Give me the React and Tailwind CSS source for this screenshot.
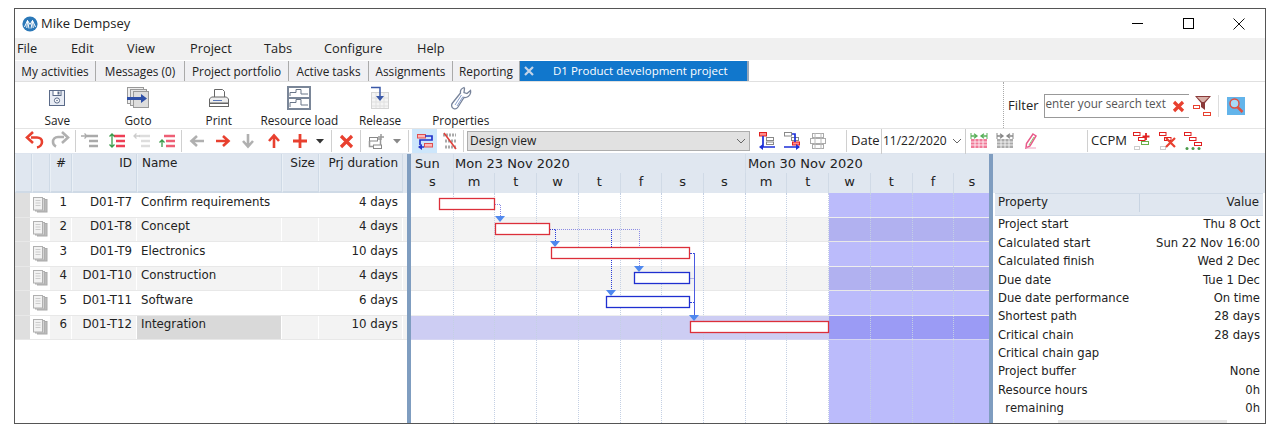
const R = '#e8402f';
const G = '#b0b0b0';

function Svg({ w = 20, h = 20, children }) {
  return <svg width={w} height={h} viewBox={`0 0 ${w} ${h}`} fill="none" className="block shrink-0">{children}</svg>;
}
const Logo = () => (
  <Svg w={16} h={16}>
    <circle cx="8" cy="8" r="7.6" fill="#2b78b8" />
    <path d="M2.5 11 L5.5 4.5 L8 8.5 L10.5 4.5 L13.5 11 M5.5 4.5 L4.8 12 M5.5 4.5 L7 12.5 M10.5 4.5 L9 12.5 M10.5 4.5 L11.2 12" stroke="#fff" strokeWidth="1" />
  </Svg>
);
const SaveIcon = () => (
  <Svg w={18} h={18}>
    <rect x="1.5" y="1.5" width="15" height="15" fill="#e8ecf4" stroke="#5a6a88" />
    <rect x="5" y="1.5" width="8" height="5" fill="#fff" stroke="#5a6a88" />
    <rect x="9.5" y="2.5" width="2" height="3" fill="#5a6a88" />
    <circle cx="9" cy="11.5" r="2.6" fill="#fff" stroke="#5a6a88" />
    <circle cx="9" cy="11.5" r=".8" fill="#5a6a88" />
  </Svg>
);
const GotoIcon = () => (
  <Svg w={24} h={22}>
    <rect x="1.5" y=".5" width="16" height="16" fill="#eee" stroke="#999" />
    <rect x="4.5" y="2.5" width="16" height="16" fill="#e4e4e4" stroke="#999" />
    <rect x="7.5" y="4.5" width="15" height="16" fill="#ddd" stroke="#999" />
    <path d="M1 10h14V7l6 4.500-6 4.500v-3H1z" fill="#2f50a8" />
  </Svg>
);
const PrintIcon = () => (
  <Svg w={22} h={20}>
    <path d="M6.5 9V1.5h8l2 2V9" fill="#fff" stroke="#666" />
    <path d="M1.5 15v-4l2-2h15l2 2v4z" fill="#eee" stroke="#666" />
    <rect x="1.5" y="15.500" width="19" height="3" fill="#fff" stroke="#666" />
    <path d="M5 12.500h9" stroke="#5a78b8" />
  </Svg>
);
const LoadIcon = () => (
  <Svg w={24} h={24}>
    <rect x="1" y="1" width="22" height="22" fill="#fff" stroke="#7a8698" strokeWidth="2" />
    <path d="M1 12h22" stroke="#7a8698" strokeWidth="2" />
    <path d="M3 10V6.500h6V3.500h5V8h7M3 21v-4.500h6v-3h5V19h7" stroke="#6a7688" />
  </Svg>
);
const ReleaseIcon = () => (
  <Svg w={20} h={24}>
    <rect x="1.5" y="6.5" width="17" height="16" fill="#f4f4f4" stroke="#d4d4d4" />
    <path d="M2 12h16M2 16h16M2 20h16M6 7v15M10 7v15M14 7v15" stroke="#e0e0e0" />
    <path d="M1 1.5h9V11" stroke="#3a58a8" strokeWidth="1.5" />
    <path d="M6 10h8l-4 5z" fill="#3a58a8" />
  </Svg>
);
const WrenchIcon = () => (
  <Svg w={22} h={24}>
    <path d="M14 1.5c-2.5 1-4 3-3.5 5.5L2.5 17c-1.500 2-1 4.500 1 5.500s3.500 0 4.500-1.500l6-9.500c3 .5 6-1.500 6.500-4.500.2-1 .2-1.500 0-2.500l-3.500 3-3-1 .5-4z" fill="#fff" stroke="#77839a" strokeWidth="1.300" />
    <path d="M5 19l6.500-10M7 20l6-9.500" stroke="#8aa0cc" />
  </Svg>
);
const BigX = ({ s = 14, c = R, sw = 3.2 }) => (
  <Svg w={s} h={s}><path d={`M2 2L${s - 2} ${s - 2}M${s - 2} 2L2 ${s - 2}`} stroke={c} strokeWidth={sw} /></Svg>
);
const Funnel = () => (
  <Svg w={20} h={22}>
    <path d="M3 1h16l-6 7v7l-4-3V8z" fill="#8a3a3a" />
    <path d="M5 2h12l-5 5H10z" fill="#d8b0a8" />
    <rect x="1.500" y="10.500" width="6" height="3" fill="#fff" stroke={R} />
    <rect x="11.500" y="17.500" width="7" height="3" fill="#fff" stroke={R} />
  </Svg>
);
const SearchIcon = () => (
  <Svg w={18} h={18}>
    <rect width="18" height="18" fill="#63b4ea" />
    <circle cx="7.500" cy="6.500" r="4.500" fill="#a8daf6" stroke="#e0503f" strokeWidth="1.500" />
    <path d="M10.500 10l5 5" stroke="#e0503f" strokeWidth="2.500" />
  </Svg>
);
const Undo = ({ c = R }) => (
  <Svg w={20} h={20}>
    <path d="M6 6.500h6c3 0 5 2 5 4.500s-2 5-5 5.500" stroke={c} strokeWidth="2.600" />
    <path d="M8 1L2 6.500 8 12" stroke={c} strokeWidth="2.600" />
  </Svg>
);
const Redo = () => (
  <Svg w={20} h={20}>
    <g transform="matrix(-1 0 0 1 20 0)">
      <path d="M6 6h6c3 0 5 2 5 5s-2 4-3 4.500" stroke={G} strokeWidth="2.600" />
      <path d="M8 1L2 6.500 8 12" stroke={G} strokeWidth="2.600" />
    </g>
  </Svg>
);
const Indent = ({ lines, arrow, mode }) => (
  <Svg w={18} h={16}>
    <path d="M6 3h11M8 8h9M8 13h9" stroke={lines} strokeWidth="2.400" />
    {mode === 'both' ? (
      <path d="M4 1v13M1.500 3.500L4 1l2.500 2.500M1.500 11.500L4 14l2.500-2.500" stroke={arrow} strokeWidth="1.300" />
    ) : mode === 'up' ? (
      <path d="M4 14V7M1.500 9.500L4 7l2.500 2.500" stroke={arrow} strokeWidth="1.300" />
    ) : (
      <path d="M0 3h6M3.500 .5L6 3 3.500 5.500" stroke={arrow} strokeWidth="1.300" transform={mode === 'left' ? 'matrix(-1 0 0 1 7 0)' : undefined} />
    )}
  </Svg>
);
const Arrow = ({ dir, c }) => {
  const rot = { left: 180, right: 0, down: 90, up: -90 }[dir];
  return (
    <Svg w={16} h={16}>
      <g transform={`rotate(${rot} 8 8)`}>
        <path d="M1 8h12M8 3l5.500 5L8 13" stroke={c} strokeWidth="2.600" />
      </g>
    </Svg>
  );
};
const Plus = () => <Svg w={16} h={16}><path d="M8 1v14M1 8h14" stroke={R} strokeWidth="2.800" /></Svg>;
const Caret = ({ c = '#333' }) => <Svg w={8} h={5}><path d="M0 0h8L4 4.500z" fill={c} /></Svg>;
const Chev = () => <svg width="10" height="6" viewBox="0 0 10 6" fill="none" className="shrink-0"><path d="M1 1l4 4 4-4" stroke="#666" /></svg>;
const LinkGrey = () => (
  <Svg w={18} h={18}>
    <rect x="1.500" y="5.500" width="8" height="3.500" stroke="#888" fill="#fff" />
    <rect x="5.500" y="13" width="8" height="3.500" stroke="#888" fill="#fff" />
    <path d="M9.500 7h3v6M1.500 9v5.500h4M13 2v6M10 5h6" stroke="#999" strokeWidth="1.500" />
  </Svg>
);
const GanttLink = () => (
  <Svg w={18} h={18}>
    <rect x="1.500" y="2.500" width="8" height="3.500" fill="#ffb8b8" stroke="#e05050" />
    <rect x="8.500" y="11.500" width="8" height="3.500" fill="#ffb8b8" stroke="#e05050" />
    <path d="M9 4h7v4H4v5M8 15H3" stroke="#2233cc" strokeWidth="1.700" />
    <path d="M6 12l-4 3 4 3z" fill="#2233cc" />
  </Svg>
);
const DesignOff = () => (
  <Svg w={18} h={18}>
    <path d="M2 3h13M4 9h11M4 15h11" stroke="#aaa" strokeWidth="3" strokeDasharray="2 1" />
    <path d="M3 1l12 16" stroke="#e0403a" strokeWidth="1.500" />
  </Svg>
);
const MoveIcon = ({ v }) => {
  if (v === 'grey') return (
    <Svg w={18} h={18}>
      <rect x="3.500" y="1.500" width="11" height="4" fill="#fff" stroke="#aaa" />
      <rect x="1.500" y="6.500" width="15" height="5" fill="#fff" stroke="#aaa" />
      <rect x="3.500" y="12.500" width="11" height="4" fill="#fff" stroke="#aaa" />
      <path d="M6 1v16M12 1v16" stroke="#bbb" />
    </Svg>
  );
  return (
    <Svg w={18} h={18}>
      {v === 'a' ? <rect x="1.500" y=".5" width="7" height="3.500" fill="#ff8c8c" stroke="#e02020" /> : <rect x="1.500" y=".5" width="7" height="3.500" fill="#fff" stroke="#888" />}
      <rect x="8.500" y={5.500} width="7" height="3" fill="#fff" stroke="#888" />
      {v === 'a' ? <rect x="8.500" y="10" width="7" height="2.500" fill="#fff" stroke="#888" /> : <rect x="9.500" y="10" width="7" height="3" fill="#ff8c8c" stroke="#e02020" />}
      <path d={v === 'a' ? 'M5 4v11M17 15H3' : 'M9 2h3v8M1 15h15'} stroke="#1c2fd8" strokeWidth="1.700" />
      <path d={v === 'a' ? 'M5 12l-4 3 4 3z' : 'M13 12l4 3-4 3z'} fill="#1c2fd8" />
    </Svg>
  );
};
const CalIcon = ({ c, a }) => (
  <Svg w={18} h={16}>
    <rect x="1" y="6" width="16" height="9" fill={c} />
    <path d="M1 9h16M1 12h16M5 6v9M9 6v9M13 6v9" stroke="#fff" strokeWidth=".8" />
    <path d="M1 3h6M4 .8L7 3 4 5.200M17 3h-6M14 .8L11 3l3 2.200" stroke={a} strokeWidth="1.300" />
    <path d="M1 0v6M17 0v6" stroke={a} />
  </Svg>
);
const Pencil = () => (
  <Svg w={12} h={16}>
    <path d="M8 1l3 2-6 10-4 2 .5-4.500z" fill="#fff" stroke="#e85a8a" strokeWidth="1.500" />
    <path d="M4 12l5-8" stroke="#8ac070" />
    <path d="M1 15h10" stroke="#f0a0c0" />
  </Svg>
);
const Ccpm = ({ v }) => (
  <Svg w={18} h={18}>
    <rect x=".5" y=".5" width="6.500" height="3" fill="#fff" stroke="#e02020" />
    <rect x="5.500" y="5.500" width="6.500" height="3" fill="#fff" stroke="#e02020" />
    {v === 'add' && <rect x="8.500" y="9.500" width="7" height="3" fill="#fff" stroke="#6ab04a" />}
    {v !== 'dots' && <rect x="1.500" y="14.500" width="5" height="3" fill="#fff" stroke="#ccc" />}
    {v === 'add' && <path d="M13 1v7M9.500 4.500h7" stroke="#e02020" strokeWidth="1.800" />}
    {v === 'del' && <path d="M7 6l9 9M16 6l-9 9" stroke="#e8402f" strokeWidth="2.200" />}
    {v === 'dots' && (
      <g>
        <rect x="10.500" y="10.500" width="7" height="3" fill="#fff" stroke="#e02020" />
        <circle cx="3" cy="16.500" r="1.500" fill="#4a9a4a" />
        <circle cx="9" cy="16.500" r="1.500" fill="#4a9a4a" />
        <circle cx="15" cy="16.500" r="1.500" fill="#4a9a4a" />
      </g>
    )}
  </Svg>
);
const DocIcon = () => (
  <Svg w={15} h={16}>
    <rect x="4.500" y="2.500" width="9.500" height="12.500" fill="#bbb" stroke="#aaa" />
    <rect x="2.500" y="1.500" width="9" height="12.500" fill="#d4d4d4" stroke="#b0b0b0" />
    <rect x=".5" y=".5" width="9" height="12.500" fill="#f2f2f2" stroke="#b0b0b0" />
    <path d="M2.500 3.500h5M2.500 6h5M2.500 8.500h5" stroke="#ccc" />
  </Svg>
);

const Sep = () => <div className="h-[22px] w-px shrink-0 bg-[#d0d0d0]" />;
const Slot = ({ w, children }) => <div className="flex shrink-0 items-center justify-center" style={{ width: w }}>{children}</div>;

const tabs = [
  ['My activities', 81],
  ['Messages (0)', 89],
  ['Project portfolio', 104],
  ['Active tasks', 80],
  ['Assignments', 84],
  ['Reporting', 67],
];
const menu = [
  ['File', 54],
  ['Edit', 56],
  ['View', 63],
  ['Project', 74],
  ['Tabs', 60],
  ['Configure', 93],
  ['Help', 60],
];
const big = [
  ['Save', <SaveIcon />],
  ['Goto', <GotoIcon />],
  ['Print', <PrintIcon />],
  ['Resource load', <LoadIcon />],
  ['Release', <ReleaseIcon />],
  ['Properties', <WrenchIcon />],
];
const rows = [
  ['1', 'D01-T7', 'Confirm requirements', '4 days'],
  ['2', 'D01-T8', 'Concept', '4 days'],
  ['3', 'D01-T9', 'Electronics', '10 days'],
  ['4', 'D01-T10', 'Construction', '4 days'],
  ['5', 'D01-T11', 'Software', '6 days'],
  ['6', 'D01-T12', 'Integration', '10 days'],
];
const days = ['s', 'm', 't', 'w', 't', 'f', 's', 's', 'm', 't', 'w', 't', 'f', 's'];
const props = [
  ['Project start', 'Thu 8 Oct'],
  ['Calculated start', 'Sun 22 Nov 16:00'],
  ['Calculated finish', 'Wed 2 Dec'],
  ['Due date', 'Tue 1 Dec'],
  ['Due date performance', 'On time'],
  ['Shortest path', '28 days'],
  ['Critical chain', '28 days'],
  ['Critical chain gap', ''],
  ['Project buffer', 'None'],
  ['Resource hours', '0h'],
  ['\u00a0\u00a0remaining', '0h'],
];
const rowH = 'h-[24.500px]';
const DAY = 41.72;

function Tri({ x, y }) {
  return <path d={`M${x - 5} ${y} h10 l-5 6z`} fill="#4f88ee" />;
}
function GanttOverlay() {
  const bar = (x1, x2, y, c, k) => <rect key={k} x={x1 + 0.5} y={y + 0.5} width={x2 - x1 - 1} height="11" fill="#fff" stroke={c} strokeWidth="1.300" />;
  const red = '#dc2f3a';
  const blue = '#1f2fd0';
  return (
    <svg width="578" height="148" viewBox="411 193 578 148" className="absolute left-0 top-0 block" fill="none">
      <g stroke="#8a8ae4" strokeWidth="1" strokeDasharray="1 1">
        <path d="M495 204.500h5.500V216" />
        <path d="M555 229.500h84.500V267" />
      </g>
      <g stroke="#2b3fd8" strokeWidth="1" strokeDasharray="1 1">
        <path d="M550 229.500h5.500V241" />
        <path d="M611.500 230V291" />
      </g>
      <g stroke="#2b3fd8" strokeWidth="1">
        <path d="M690 253.500h4.500" strokeDasharray="2 1" />
        <path d="M694.500 253V316" stroke="#4a5ae0" />
        <path d="M690 302.500h4" strokeDasharray="2 1" />
      </g>
      <path d="M690 278.500h4" stroke="#b8b8e0" />
      {bar(439, 495, 198, red, 'a')}
      {bar(495, 550, 223, red, 'b')}
      {bar(551, 690, 247, red, 'c')}
      {bar(634, 690, 272, blue, 'd')}
      {bar(606, 690, 296, blue, 'e')}
      {bar(690, 829, 321, red, 'f')}
      <Tri x={500} y={216} />
      <Tri x={555} y={241} />
      <Tri x={639} y={266} />
      <Tri x={611} y={290} />
      <Tri x={694} y={315} />
    </svg>
  );
}

export default function App() {
  return (
    <div className="h-[434px] w-[1278px] overflow-hidden bg-white pl-[14px] pt-2 font-['Open_Sans','Noto_Sans',sans-serif] text-[12px] text-[#222]">
      <div className="flex h-[416px] w-[1252px] flex-col overflow-hidden border border-[#555]">
        {/* Title bar */}
        <div className="flex h-[29px] shrink-0 items-center bg-white pl-[7px]">
          <Logo />
          <span className="ml-[3px] text-[13px] text-[#222]">Mike Dempsey</span>
          <div className="ml-auto flex items-center pr-[2px]">
            <Slot w={48}><div className="h-px w-[11px] bg-black" /></Slot>
            <Slot w={54}><div className="h-[11px] w-[11px] border border-black" /></Slot>
            <Slot w={48}>
              <svg width="12" height="12" viewBox="0 0 12 12" fill="none"><path d="M.5.5l11 11M11.500.5l-11 11" stroke="#111" /></svg>
            </Slot>
          </div>
        </div>
        {/* Menu */}
        <div className="flex h-[22px] shrink-0 items-center bg-[#f0f0f0] pl-[2px] text-[12.800px]">
          {menu.map(([m, w]) => <div key={m} className="shrink-0" style={{ width: w }}>{m}</div>)}
        </div>
        {/* Tabs */}
        <div className="flex h-[22px] shrink-0 border-b border-[#e0e0e0] bg-white pt-px text-[11.800px]">
          {tabs.map(([t, w]) => (
            <div key={t} className="flex shrink-0 items-center justify-center border-r border-[#aaa] bg-[#f0f0f3] pt-[2px]" style={{ width: w }}>{t}</div>
          ))}
          <div className="flex w-[229px] shrink-0 items-center whitespace-nowrap border-r-2 border-[#9aa8b8] bg-[#1177cc] pl-[3px] text-[11.500px] text-white">
            <BigX s={12} c="#c4d4e8" sw={2.200} />
            <span className="mb-px ml-[18px]">D1 Product development project</span>
          </div>
        </div>
        {/* Big toolbar */}
        <div className="flex h-[47px] shrink-0 items-stretch border-b border-[#e4e4e4] pl-[2px]">
          {big.map(([t, ic]) => (
            <div key={t} className="flex w-[80.700px] shrink-0 flex-col items-center justify-end">
              <div className="flex h-[26px] items-center justify-center">{ic}</div>
              <div className="mt-[1px] whitespace-nowrap text-[11.800px] leading-[16px]">{t}</div>
            </div>
          ))}
          <div className="ml-auto flex w-[262px] items-center border-l border-dotted border-[#aaa] pl-[4px] pt-[2px]">
            <span className="text-[13px]">Filter</span>
            <div className="ml-[5px] flex h-[24px] w-[145px] items-center border border-r-0 border-[#999] pl-px text-[#555]">
              <span className="mb-[4px] text-[11.700px]">enter your search text</span>
            </div>
            <div className="-ml-[17px]"><BigX s={13} /></div>
            <div className="ml-[7px]"><Funnel /></div>
            <div className="ml-[6px] h-[22px] w-px bg-[#ddd]" />
            <div className="ml-[8px]"><SearchIcon /></div>
          </div>
        </div>
        {/* Second toolbar */}
        <div className="flex h-[25px] shrink-0 items-center border-b border-[#dde4ee] pl-[7px]">
          <Slot w={26}><Undo /></Slot>
          <Slot w={24}><Redo /></Slot>
          <Slot w={3} />
          <Sep />
          <Slot w={28}><Indent lines="#aaa" arrow="#aaa" mode="right" /></Slot>
          <Slot w={25}><Indent lines="#ee3f55" arrow="#3a9a4a" mode="both" /></Slot>
          <Slot w={25}><Indent lines="#ddd" arrow="#ccc" mode="left" /></Slot>
          <Slot w={25}><Indent lines="#ee5f75" arrow="#3a9a4a" mode="up" /></Slot>
          <Slot w={2} />
          <Sep />
          <Slot w={30}><Arrow dir="left" c={G} /></Slot>
          <Slot w={22}><Arrow dir="right" c={R} /></Slot>
          <Slot w={28}><Arrow dir="down" c={G} /></Slot>
          <Slot w={24}><Arrow dir="up" c={R} /></Slot>
          <Slot w={28}><Plus /></Slot>
          <Slot w={12}><Caret /></Slot>
          <Slot w={5} />
          <Sep />
          <Slot w={28}><BigX s={15} /></Slot>
          <Sep />
          <Slot w={32}><LinkGrey /></Slot>
          <Slot w={8}><Caret c="#888" /></Slot>
          <Slot w={7} />
          <Sep />
          <Slot w={3} />
          <div className="flex h-[24px] w-[25px] shrink-0 items-center justify-center bg-[#cde6fb]"><GanttLink /></div>
          <Slot w={26}><DesignOff /></Slot>
          <Sep />
          <Slot w={3} />
          <div className="flex h-[20px] w-[283px] shrink-0 items-center justify-between border border-[#adadad] bg-[#e1e1e1] pl-[2px] pr-[3px] text-[#222]">
            <span>Design view</span><Chev />
          </div>
          <Slot w={34}><MoveIcon v="a" /></Slot>
          <Slot w={16}><MoveIcon v="b" /></Slot>
          <Slot w={36}><MoveIcon v="grey" /></Slot>
          <Slot w={10} />
          <Sep />
          <span className="ml-[4px] w-[30px] shrink-0 text-[13px]">Date</span>
          <div className="flex h-[25px] w-[85px] shrink-0 items-center justify-between border-x border-[#ccc] pl-px pr-[3px] text-[12px]">
            <span>11/22/2020</span><Chev />
          </div>
          <Slot w={26}><CalIcon c="#f07a98" a="#5ab05a" /></Slot>
          <Slot w={26}><CalIcon c="#aaa" a="#888" /></Slot>
          <Slot w={26}><Pencil /></Slot>
          <Slot w={43} />
          <Sep />
          <span className="ml-[3px] w-[39px] shrink-0 text-[13px]">CCPM</span>
          <Slot w={24}><Ccpm v="add" /></Slot>
          <Slot w={28}><Ccpm v="del" /></Slot>
          <Slot w={22}><Ccpm v="dots" /></Slot>
        </div>
        {/* Body */}
        <div className="flex min-h-0 flex-1 font-['DejaVu_Sans',sans-serif] text-[11.800px] text-[#222]">
          {/* Grid */}
          <div className="w-[392px] shrink-0">
            <div className="flex h-[39px] bg-[#e0e7f0] text-[12px]">
              <Hd w={17} />
              <Hd w={18} />
              <Hd w={22}><span className="block text-center">#</span></Hd>
              <Hd w={65}><span className="block pr-[4px] text-right">ID</span></Hd>
              <Hd w={145}><span className="block pl-[4px]">Name</span></Hd>
              <Hd w={37}><span className="block pr-[3px] text-right">Size</span></Hd>
              <Hd w={84}><span className="block whitespace-nowrap pr-[4px] text-right">Prj duration</span></Hd>
              <div className="w-[4px]" />
            </div>
            {rows.map((r, i) => (
              <div key={r[0]} className={`flex ${rowH} items-stretch border-b border-[#e8e8e8] ${i % 2 ? 'bg-[#f3f3f3]' : 'bg-white'}`}>
                <div className="w-[17px] shrink-0 border-r-2 border-white bg-[#dfdfdf]" />
                <div className="flex w-[18px] shrink-0 items-center justify-center border-r border-white bg-white"><DocIcon /></div>
                <div className="flex w-[22px] shrink-0 items-center justify-end border-r border-white pb-[4px] pr-[4px]">{r[0]}</div>
                <div className="flex w-[65px] shrink-0 items-center justify-end border-r border-white pb-[4px] pr-[4px]">{r[1]}</div>
                <div className={`flex w-[145px] shrink-0 items-center whitespace-nowrap border-r border-white pb-[4px] pl-[4px] ${i === 5 ? 'bg-[#d9d9d9]' : ''}`}>{r[2]}</div>
                <div className="w-[37px] shrink-0 border-r border-white" />
                <div className="flex w-[84px] shrink-0 items-center justify-end border-r border-white pb-[4px] pr-[4px]">{r[3]}</div>
              </div>
            ))}
          </div>
          <div className="w-[4px] shrink-0 bg-[#7f9dc0]" />
          {/* Gantt */}
          <div className="w-[578px] shrink-0 overflow-hidden">
            <div className="h-[39px] bg-[#e0e7f0] text-[13px]">
              <div className="flex h-[19px] items-center pl-px">
                <div className="w-[42px] shrink-0 border-r border-[#d4dde8] pl-[3px]">Sun</div>
                <div className="w-[292px] shrink-0 whitespace-nowrap border-r border-[#d4dde8] pl-[1px]">Mon 23 Nov 2020</div>
                <div className="whitespace-nowrap pl-[2px]">Mon 30 Nov 2020</div>
              </div>
              <div className="flex h-[20px] pl-px">
                {days.map((d, i) => (
                  <div key={i} className="flex shrink-0 items-start justify-center border-r border-[#d0dae6] pt-px leading-[16px]" style={{ width: i === 13 ? 36 : DAY }}>{d}</div>
                ))}
              </div>
            </div>
            <div className="relative h-[232px] bg-white">
              {rows.map((r, i) => (
                <div key={r[0]} className={`flex ${rowH} border-b ${i === 5 ? 'border-[#d6d6f2] bg-[#cdcdf3]' : i % 2 ? 'border-[#e8e8e8] bg-[#f3f3f3]' : 'border-[#eee] bg-white'}`}>
                  <div className="w-[418px] shrink-0" />
                  <div className={`flex-1 ${i === 5 ? 'bg-[#9b9bf5]' : i % 2 ? 'bg-[#b1b1f0]' : 'bg-[#bbbbfb]'}`} />
                </div>
              ))}
              <div className="absolute bottom-0 left-[418px] right-0 top-[147px] bg-[#bbbbfb]" />
              <div className="pointer-events-none absolute inset-0 flex pl-px">
                {days.map((d, i) => (
                  <div key={i} className="shrink-0 border-r border-dotted border-[#c4d0e4]" style={{ width: i === 13 ? 36 : DAY }} />
                ))}
              </div>
              <GanttOverlay />
            </div>
          </div>
          <div className="w-[4px] shrink-0 bg-[#7f9dc0]" />
          {/* Properties */}
          <div className="flex min-w-0 flex-1 flex-col">
            <div className="h-[39px] shrink-0 bg-[#e0e7f0]" />
            <div className="mx-[2px] flex h-[23px] shrink-0 items-center border-y border-[#d0dae6] bg-[#e0e7f0] pb-[3px]">
              <div className="w-[145px] border-r border-[#c8d4e2] pl-[3px]">Property</div>
              <div className="flex-1 pr-[4px] text-right">Value</div>
            </div>
            {props.map(([p, v]) => (
              <div key={p} className="flex h-[18.350px] shrink-0 items-center justify-between whitespace-pre pl-[5px] pr-[5px] text-[11.600px]">
                <span>{p}</span><span>{v}</span>
              </div>
            ))}
            <div className="ml-[65px] mr-[38px] mt-auto h-[3px] bg-[#e6e6e6]" />
          </div>
        </div>
      </div>
    </div>
  );
}

function Hd({ w, children }) {
  return (
    <div className="shrink-0 border-x border-b-2 border-[#cfdae6] border-l-[#eaf0f6] pt-px leading-[16px]" style={{ width: w }}>
      {children}
    </div>
  );
}
